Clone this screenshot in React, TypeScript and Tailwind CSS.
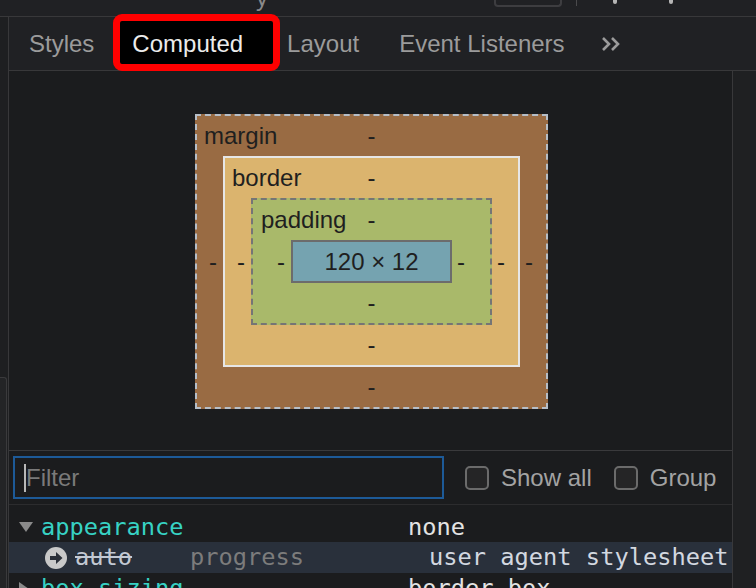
import { FC } from "react";

const sans = "font-['Liberation_Sans',Arial,sans-serif]";
const mono = "font-['DejaVu_Sans_Mono',monospace]";

const Dash: FC<{ side?: "l" | "r" }> = ({ side }) => {
  if (side === "l") return <div className="w-[26px] flex justify-end pr-[6px]">-</div>;
  if (side === "r") return <div className="w-[26px] flex justify-start pl-[5px]">-</div>;
  return <div className="h-[40px] flex items-center justify-center">-</div>;
};

const BoxModel: FC = () => {
  return (
    <div className="flex justify-center pt-[43px] pb-[41px] pl-[2px] border-b border-[#3a3a3c]">
      <div className={`${sans} text-[24px] text-[#1f1f1f] leading-none`}>
        {/* margin */}
        <div className="relative w-[353px] border-2 border-dashed border-[#b6bec8] bg-[#996b43]">
          <span className="absolute left-[7px] top-[8px]">margin</span>
          <Dash />
          <div className="flex items-center">
            <Dash side="l" />
            {/* border */}
            <div className="relative flex-1 border-2 border-[#e6e6e6] bg-[#dbb46e]">
              <span className="absolute left-[7px] top-[8px]">border</span>
              <Dash />
              <div className="flex items-center">
                <Dash side="l" />
                {/* padding */}
                <div className="relative flex-1 border-2 border-dashed border-[#757575] bg-[#a9b96a]">
                  <span className="absolute left-[8px] top-[8px]">padding</span>
                  <Dash />
                  <div className="flex items-center">
                    <div className="w-[38px] flex justify-end pr-[6px]">-</div>
                    <div className="flex-1 h-[43px] flex items-center justify-center border-2 border-[#6c6c6c] bg-[#75a3b0]">
                      120 × 12
                    </div>
                    <div className="w-[38px] flex justify-start pl-[5px]">-</div>
                  </div>
                  <Dash />
                </div>
                <Dash side="r" />
              </div>
              <Dash />
            </div>
            <Dash side="r" />
          </div>
          <Dash />
        </div>
      </div>
    </div>
  );
};

const Checkbox: FC<{ label: string }> = ({ label }) => (
  <div className="flex items-center">
    <div className="w-[24px] h-[24px] rounded-[5px] border-2 border-[#6b6b6b] bg-[#252526]" />
    <span className="ml-[12px] text-[#a3a3a3]">{label}</span>
  </div>
);

const App: FC = () => {
  return (
    <div className={`w-[756px] h-[588px] overflow-hidden bg-[#1b1c1e] flex flex-col ${sans}`}>
      {/* top bar, mostly cut off */}
      <div className="h-[17px] shrink-0 bg-[#202124] border-b border-[#38383a] flex items-start overflow-hidden">
        <span className="ml-[256px] -mt-[20px] text-[24px] text-[#8a8a8a]">y</span>
        <div className="ml-[226px] w-[68px] h-[8px] -mt-[1px] rounded-b-[4px] border-2 border-t-0 border-[#3d3d40]" />
        <div className="ml-[14px] w-px h-[6px] bg-[#4a4a4c]" />
        <div className="ml-[36px] w-[4px] h-[4px] rounded-b-full bg-[#b5b5b5]" />
        <div className="ml-[52px] w-[4px] h-[4px] rounded-b-full bg-[#b5b5b5]" />
      </div>

      <div className="flex-1 flex min-h-0">
        {/* left strip */}
        <div className="w-[9px] shrink-0 bg-[#1e1f21] border-r border-[#38383a] flex flex-col">
          <div className="h-[360px]" />
          <div className="flex-1 w-[7px] rounded-tr-[3px] bg-[#232426] border-r border-t border-[#3a3a3c]" />
        </div>

        <div className="flex-1 flex flex-col min-w-0">
          {/* tabs */}
          <div className="h-[54px] shrink-0 bg-[#202124] border-b border-[#38383a] flex items-stretch text-[24px] text-[#9b9b9b]">
            <div className="px-[20px] flex items-center">Styles</div>
            <div className="relative pl-[20px] pr-[24px] flex items-center">
              <div className="absolute left-[-1px] right-[-13px] top-[-3px] bottom-[-1px] rounded-[9px] border-[7px] border-[#ff0000] bg-black" />
              <span className="relative -ml-[2px] text-[#ececec]">Computed</span>
            </div>
            <div className="px-[20px] flex items-center">Layout</div>
            <div className="px-[20px] flex items-center">Event Listeners</div>
            <div className="ml-[16px] flex items-center">
              <svg width="20" height="16" viewBox="0 0 20 16" fill="none" stroke="#9b9b9b" strokeWidth="2.6">
                <path d="M2 2l6 6-6 6" />
                <path d="M11 2l6 6-6 6" />
              </svg>
            </div>
          </div>

          <div className="flex-1 flex min-h-0">
            <div className="flex-1 flex flex-col min-w-0 overflow-hidden">
              <BoxModel />

              {/* filter row */}
              <div className="h-[54px] shrink-0 flex items-center border-b border-[#2c2c2e] pl-[4px] text-[24px]">
                <div className="w-[431px] h-[43px] border-2 border-[#1d5a98] flex items-center pl-[9px]">
                  <span className="w-[2px] h-[28px] bg-[#b8b8b8]" />
                  <span className="text-[#7a7a7a]">Filter</span>
                </div>
                <div className="ml-[21px]">
                  <Checkbox label="Show all" />
                </div>
                <div className="ml-[22px]">
                  <Checkbox label="Group" />
                </div>
              </div>

              {/* computed properties */}
              <div className={`${mono} text-[23.7px] pt-[6px] whitespace-nowrap`}>
                <div className="h-[31px] flex items-center pl-[10px] pt-[2px]">
                  <div className="w-[22px]">
                    <svg width="14" height="11" viewBox="0 0 14 11">
                      <polygon points="0,0 14,0 7,10" fill="#8a8a8a" />
                    </svg>
                  </div>
                  <span className="w-[367px] text-[#37d2c4]">appearance</span>
                  <span className="text-[#e3e3e3]">none</span>
                </div>
                <div className="h-[31px] flex items-center pl-[36px] bg-[#29303b]">
                  <svg width="22" height="22" viewBox="0 0 22 22" className="mr-[8px] shrink-0">
                    <circle cx="11" cy="11" r="11" fill="#c9c9c9" />
                    <path d="M5 9h6V5l6.5 6-6.5 6v-4H5z" fill="#2a2f38" />
                  </svg>
                  <span className="w-[115px] shrink-0 text-[#c3c9d3] line-through">auto</span>
                  <span className="w-[239px] shrink-0 text-[#7c7c7c]">progress</span>
                  <span className="text-[#d3d8e0]">user agent stylesheet</span>
                </div>
                <div className="h-[31px] flex items-center pl-[10px]">
                  <div className="w-[22px]">
                    <svg width="11" height="14" viewBox="0 0 11 14">
                      <polygon points="0,0 10,7 0,14" fill="#8a8a8a" />
                    </svg>
                  </div>
                  <span className="w-[367px] text-[#37d2c4]">box-sizing</span>
                  <span className="text-[#e3e3e3]">border-box</span>
                </div>
              </div>
            </div>

            {/* right strip */}
            <div className="w-[24px] shrink-0 bg-[#1f2022] border-l border-[#38383a]" />
          </div>
        </div>
      </div>
    </div>
  );
};

export default App;
